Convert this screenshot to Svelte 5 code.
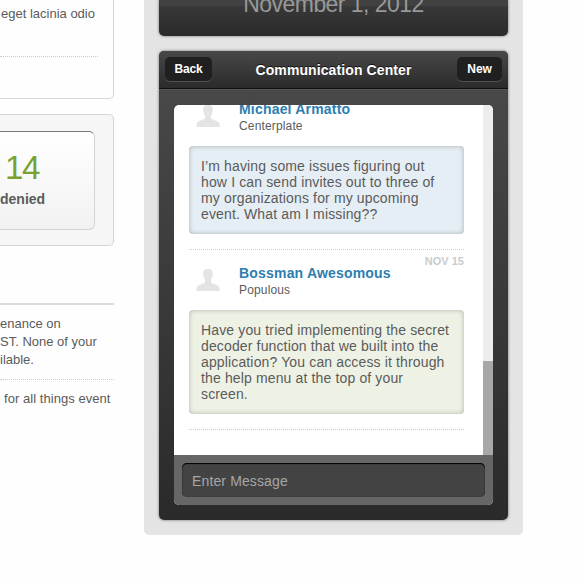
<script>
  const messages = [
    {
      name: 'Michael Armatto', org: 'Centerplate', date: '', tone: 'blue',
      lines: ['I’m having some issues figuring out', 'how I can send invites out to three of', 'my organizations for my upcoming', 'event. What am I missing??']
    },
    {
      name: 'Bossman Awesomous', org: 'Populous', date: 'NOV 15', tone: 'green',
      lines: ['Have you tried implementing the secret', 'decoder function that we built into the', 'application? You can access it through', 'the help menu at the top of your', 'screen.']
    }
  ];
</script>

<div class="page">
  <main class="left">
    <section class="card article">
      <p>eget lacinia odio</p>
      <div class="dots"></div>
    </section>
    <section class="card stats">
      <div class="stat">
        <div class="number">14</div>
        <div class="label">denied</div>
      </div>
    </section>
    <section class="notices">
      <p>enance on<br />ST. None of your<br />ilable.</p>
      <p class="second">for all things event</p>
    </section>
  </main>

  <aside class="sidebar">
    <section class="panel date"><div class="gloss"></div><h1>November 1, 2012</h1></section>
    <section class="panel comm">
      <header>
        <button>Back</button>
        <h2>Communication Center</h2>
        <button class="new">New</button>
      </header>
      <div class="chat">
        <div class="scroll">
          <div class="list">
            {#each messages as m}
              <article class="message">
                <div class="head">
                  <svg class="avatar" width="24" height="24" viewBox="0 0 24 24">
                    <path d="M12 1C8.5 1 7.1 2.6 7.3 5.5C7.4 8.4 8 10.4 9 12V14.2C8.6 15.2 6.2 15.8 3.4 16.9C1.4 17.8 .6 18.8 .6 20.5V23H23.6V20.5C23.6 18.8 22.6 17.8 20.6 16.9C17.8 15.8 15.4 15.2 15 14.2V12C16 10.4 16.6 8.4 16.7 5.5C16.9 2.6 15.5 1 12 1Z" fill="#e4e4e4" />
                  </svg>
                  <div class="who">
                    <h3>{m.name}</h3>
                    <p>{m.org}</p>
                  </div>
                  <time>{m.date}</time>
                </div>
                <div class="bubble {m.tone}">
                  {#each m.lines as line}<div>{line}</div>{/each}
                </div>
              </article>
            {/each}
          </div>
          <div class="track"><div class="thumb"></div></div>
        </div>
        <footer><div class="input">Enter Message</div></footer>
      </div>
    </section>
  </aside>
</div>

<style>
  :global(body) { background: #fff; overflow: hidden; }
  * { box-sizing: border-box; }
  h1, h2, h3, p { margin: 0; }
  .page {
    display: flex; align-items: flex-start; width: 581px; height: 581px; overflow: hidden;
    background: #fefefe; color: #5b5b5b; white-space: nowrap;
    font-family: "Liberation Sans", Arial, sans-serif;
  }
  .left { width: 114px; margin-right: 30px; flex: none; font-size: 13px; line-height: 18px; }
  .card { border: 1px solid #d6d6d6; border-left: 0; }
  .article { height: 99px; border-top: 0; border-radius: 0 0 5px 0; padding: 5px 15px 0 1px; }
  .dots { margin: 33px 0 0 -1px; border-top: 1px dotted #ccc; }
  .stats { margin-top: 15px; height: 132px; padding: 16px 18px 0 0; background: #f6f6f6; border-radius: 0 5px 5px 0; }
  .stat {
    height: 99px; border: 1px solid #d4d4d4; border-left: 0; border-top-color: #777;
    border-radius: 0 6px 6px 0; background: linear-gradient(#fff, #f2f2f2); padding-top: 17px;
  }
  .number { font: 33px/38px "Liberation Sans", Arial, sans-serif; color: #77a22f; padding-left: 5px; letter-spacing: -1.4px; }
  .label { font-weight: bold; font-size: 14px; line-height: 24px; }
  .notices { margin-top: 57px; border-top: 2px solid #dadada; padding-top: 10px; }
  .second { margin-top: 10px; padding: 10px 0 0 4px; border-top: 1px dotted #ccc; letter-spacing: .05px; }

  .sidebar { width: 379px; height: 535px; padding: 0 15px; background: #e4e4e4; border-radius: 0 0 5px 5px; flex: none; }
  .panel { border-radius: 5px; box-shadow: 0 0 3px rgba(0, 0, 0, .55); overflow: hidden; }
  .date { height: 36px; border-radius: 0 0 5px 5px; background: linear-gradient(#3b3b3b, #2a2a2a); display: grid; }
  .gloss { height: 6px; background: #414141; grid-area: 1 / 1; }
  .date h1 { grid-area: 1 / 1; margin-top: -9px; text-align: center; font-weight: normal; font-size: 23px; line-height: 26px; letter-spacing: -.55px; color: #989898; }
  .comm { margin-top: 15px; height: 469px; background: linear-gradient(#484848 38px, #2a2a2a); }
  header {
    height: 38px; display: flex; align-items: center; justify-content: space-between; padding: 0 6px 1px;
    background: linear-gradient(#484848, #2b2b2b); border-bottom: 1px solid #111; box-shadow: 0 1px #555;
  }
  header h2 { font-size: 14px; line-height: 16px; padding-top: 2px; letter-spacing: .1px; margin-right: 2px; color: #fff; text-shadow: 0 -1px #111; }
  button {
    width: 47px; height: 24px; border: 0; border-radius: 5px; padding: 0; background: #202020; color: #fff;
    font: bold 12px "Liberation Sans", Arial, sans-serif; letter-spacing: -.15px; box-shadow: 0 1px #505050;
  }
  .new { width: 45px; }
  .chat { margin: 16px 15px 0; height: 400px; border-radius: 5px; overflow: hidden; background: #fff; }
  .scroll { height: 350px; display: flex; overflow: hidden; justify-content: space-between; }
  .list { width: 275px; margin: -19px 0 0 15px; }
  .message { border-bottom: 1px dotted #ccc; padding-bottom: 15px; }
  .head { height: 60px; display: flex; padding-left: 7px; }
  .avatar { margin-top: 18px; }
  .who { margin: 14px 0 0 19px; width: 170px; }
  h3 { font-size: 14px; line-height: 18px; color: #2c7eaf; letter-spacing: .19px; }
  .who p { font-size: 12px; line-height: 16px; letter-spacing: .15px; }
  time { margin: 4px 0 0 auto; font-weight: bold; font-size: 11px; line-height: 14px; color: #c9cccc; }
  .bubble { padding: 12px; border-radius: 4px; font-size: 14px; line-height: 16px; letter-spacing: .14px; box-shadow: inset 0 0 5px rgba(0, 0, 0, .26); }
  .blue { background: #e5eef4; }
  .green { background: #eef2e5; }
  .track { width: 10px; background: #ededed; display: flex; align-items: flex-end; }
  .thumb { width: 10px; height: 94px; background: #a8a8a8; }
  footer { height: 50px; padding: 8px; background: #666; }
  .input {
    height: 34px; width: 303px; border-radius: 5px; background: #434343; color: #a6a6a6; padding-left: 10px;
    font-size: 14px; line-height: 36px; letter-spacing: .13px; box-shadow: inset 0 1px 1px #000, inset 0 0 1px #222;
  }
</style>
